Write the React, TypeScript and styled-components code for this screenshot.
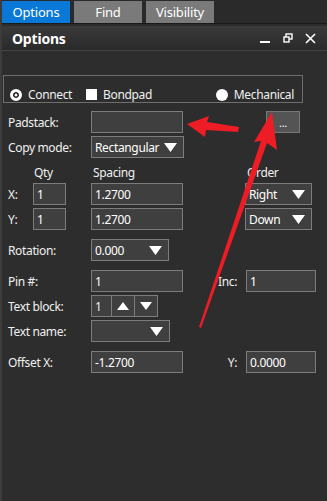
import React from 'react'
import { styled, createGlobalStyle } from 'styled-components'

const GlobalStyle = createGlobalStyle`
    html, body {
        margin: 0;
        background: #2d2d2d;
        font-family: "Noto Sans", "Open Sans", sans-serif;
        font-size: 12px;
        letter-spacing: -0.35px;
        color: #f0f0f0;
    }
`

type Field = { width: number, value?: string, select?: boolean }

const Caret = () => (
    <svg width="13" height="9" viewBox="0 0 13 9">
        <polygon points="0,0 13,0 6.5,9" fill="#ffffff" />
    </svg>
)

function Input({ width, value, select }: Field) {
    return (
        <Box style={{ width }}>
            <span>{value}</span>
            {select ? <Caret /> : null}
        </Box>
    )
}

function App() {
    return (
        <Page>
            <GlobalStyle />
            <TabBar>
                <Tab $active>Options</Tab>
                <Tab>Find</Tab>
                <Tab>Visibility</Tab>
            </TabBar>
            <TitleBar>
                <Title>Options</Title>
                <WinButtons>
                    <svg width="11" height="12" viewBox="0 0 11 12"><rect x="0" y="9" width="10" height="2" fill="#fff" /></svg>
                    <svg width="10" height="10" viewBox="0 0 10 10">
                        <rect x="3" y="1" width="6" height="5" fill="none" stroke="#fff" strokeWidth="1.4" />
                        <rect x="1" y="4" width="5" height="5" fill="#333" stroke="#fff" strokeWidth="1.4" />
                    </svg>
                    <svg width="11" height="11" viewBox="0 0 11 11">
                        <path d="M1 1 L10 10 M10 1 L1 10" stroke="#fff" strokeWidth="1.6" />
                    </svg>
                </WinButtons>
            </TitleBar>
            <Body>
                <Group>
                    <Choice>
                        <Radio $on />
                        Connect
                    </Choice>
                    <Choice>
                        <Check />
                        Bondpad
                    </Choice>
                    <Choice $push>
                        <Radio />
                        Mechanical
                    </Choice>
                </Group>

                <Row $top={8}>
                    <Label>Padstack:</Label>
                    <Input width={92} />
                    <Ellipsis>...</Ellipsis>
                </Row>
                <Row $top={3}>
                    <Label>Copy mode:</Label>
                    <Input width={93} value="Rectangular" select />
                </Row>

                <Headers>
                    <HeadCell $w={85} $pad={26}>Qty</HeadCell>
                    <HeadCell $w={154}>Spacing</HeadCell>
                    <HeadCell>Order</HeadCell>
                </Headers>
                <Row $top={3}>
                    <AxisLabel>X:</AxisLabel>
                    <Input width={33} value="1" />
                    <Spacer $w={25} />
                    <Input width={92} value="1.2700" />
                    <Spacer $w={62} />
                    <Input width={67} value="Right" select />
                </Row>
                <Row $top={3}>
                    <AxisLabel>Y:</AxisLabel>
                    <Input width={33} value="1" />
                    <Spacer $w={25} />
                    <Input width={92} value="1.2700" />
                    <Spacer $w={62} />
                    <Input width={67} value="Down" select />
                </Row>

                <Row $top={9}>
                    <Label>Rotation:</Label>
                    <Input width={78} value="0.000" select />
                </Row>
                <Row $top={9}>
                    <Label>Pin #:</Label>
                    <Input width={92} value="1" />
                    <SideLabel>Inc:</SideLabel>
                    <Input width={70} value="1" />
                </Row>
                <Row $top={3}>
                    <Label>Text block:</Label>
                    <Spin>
                        <SpinValue>1</SpinValue>
                        <SpinButton>
                            <svg width="12" height="8" viewBox="0 0 12 8"><polygon points="0,8 12,8 6,0" fill="#fff" /></svg>
                        </SpinButton>
                        <SpinButton>
                            <svg width="12" height="8" viewBox="0 0 12 8"><polygon points="0,0 12,0 6,8" fill="#fff" /></svg>
                        </SpinButton>
                    </Spin>
                </Row>
                <Row $top={3}>
                    <Label>Text name:</Label>
                    <Input width={79} select />
                </Row>
                <Row $top={9}>
                    <Label>Offset X:</Label>
                    <Input width={92} value="-1.2700" />
                    <SideLabel>Y:</SideLabel>
                    <Input width={70} value="0.0000" />
                </Row>
            </Body>

            <Arrows width="327" height="501" viewBox="0 0 327 501">
                <polygon points="187,124 209,116 207,122 239,127 238,132 206,130 205,137" fill="#ee1c25" />
                <polygon points="272,112 277,150 267,143 201,328 199,327 261,141 254,142" fill="#ee1c25" />
            </Arrows>
        </Page>
    )
}

const Page = styled.div`
    position: relative;
    width: 327px;
    height: 501px;
    background: #2d2d2d;
    overflow: hidden;
    border-left: 2px solid #3c3c3c;
    box-sizing: border-box;
`

const TabBar = styled.div`
    display: flex;
    gap: 4px;
    height: 24px;
    padding: 1px 0 0 0;
    box-sizing: border-box;
    background: #2a2a2a;
    border-bottom: 1px solid #1a1a1a;
`

const Tab = styled.div<{ $active?: boolean }>`
    width: 68px;
    height: 22px;
    display: flex;
    align-items: center;
    justify-content: center;
    font-size: 13px;
    letter-spacing: -0.2px;
    color: #ffffff;
    background: ${({ $active }) => $active ? '#0a78d7' : '#7a7a7a'};
`

const TitleBar = styled.div`
    display: flex;
    align-items: center;
    justify-content: space-between;
    height: 24px;
    margin-top: 2px;
    padding: 0 11px 0 10px;
    background: linear-gradient(#3a3a3a, #2a2a2a);
    border-bottom: 1px solid #444444;
`

const Title = styled.div`
    font-size: 14px;
    font-weight: bold;
    letter-spacing: -0.2px;
    color: #ffffff;
`

const WinButtons = styled.div`
    display: flex;
    align-items: center;
    gap: 12px;
`

const Body = styled.div`
    padding: 24px 0 0 0;
`

const Group = styled.div`
    display: flex;
    align-items: center;
    height: 28px;
    width: 300px;
    margin-left: 1px;
    padding: 11px 8px 0 6px;
    box-sizing: border-box;
    border: 1px solid #6e6e6e;
`

const Choice = styled.div<{ $push?: boolean }>`
    display: flex;
    align-items: center;
    gap: 6px;
    margin-right: 14px;
    ${({ $push }) => $push ? 'margin-left: auto; margin-right: 0;' : ''}
`

const Radio = styled.span<{ $on?: boolean }>`
    width: 12px;
    height: 12px;
    border-radius: 50%;
    background: #ffffff;
    box-sizing: border-box;
    border: ${({ $on }) => $on ? '3px solid #ffffff' : 'none'};
    box-shadow: ${({ $on }) => $on ? 'inset 0 0 0 1.5px #111' : 'none'};
`

const Check = styled.span`
    width: 11px;
    height: 11px;
    background: #ffffff;
`

const Row = styled.div<{ $top: number }>`
    display: flex;
    align-items: center;
    height: 22px;
    margin-top: ${({ $top }) => $top}px;
    padding-left: 6px;
`

const Label = styled.div`
    width: 83px;
    flex: none;
`

const AxisLabel = styled.div`
    width: 25px;
    flex: none;
`

const SideLabel = styled.div`
    width: 63px;
    flex: none;
    text-align: right;
    padding-right: 9px;
    box-sizing: border-box;
`

const Spacer = styled.div<{ $w: number }>`
    width: ${({ $w }) => $w}px;
    flex: none;
`

const Box = styled.div`
    height: 22px;
    flex: none;
    display: flex;
    align-items: center;
    justify-content: space-between;
    padding: 0 6px 0 3px;
    box-sizing: border-box;
    background: #3f3f3f;
    border: 1px solid #7c7c7c;
    color: #ffffff;
    font-size: 12px;
`

const Ellipsis = styled.div`
    margin-left: 83px;
    width: 34px;
    height: 22px;
    display: flex;
    align-items: center;
    justify-content: center;
    background: #545454;
    border: 1px solid #777777;
    box-sizing: border-box;
    color: #ffffff;
    font-size: 11px;
`

const Headers = styled.div`
    display: flex;
    margin-top: 6px;
    padding-left: 6px;
    height: 16px;
    align-items: center;
`

const HeadCell = styled.div<{ $w?: number, $pad?: number }>`
    width: ${({ $w }) => $w ? `${$w}px` : 'auto'};
    padding-left: ${({ $pad }) => $pad ?? 0}px;
    box-sizing: border-box;
    flex: none;
`

const Spin = styled.div`
    display: flex;
    height: 22px;
    border: 1px solid #7c7c7c;
    box-sizing: border-box;
    background: #3f3f3f;
`

const SpinValue = styled.div`
    width: 19px;
    padding-left: 3px;
    box-sizing: border-box;
    display: flex;
    align-items: center;
    font-size: 12px;
`

const SpinButton = styled.div`
    width: 22px;
    display: flex;
    align-items: center;
    justify-content: center;
    border-left: 1px solid #7c7c7c;
`

const Arrows = styled.svg`
    position: absolute;
    left: -2px;
    top: 0;
    pointer-events: none;
`

export default App
